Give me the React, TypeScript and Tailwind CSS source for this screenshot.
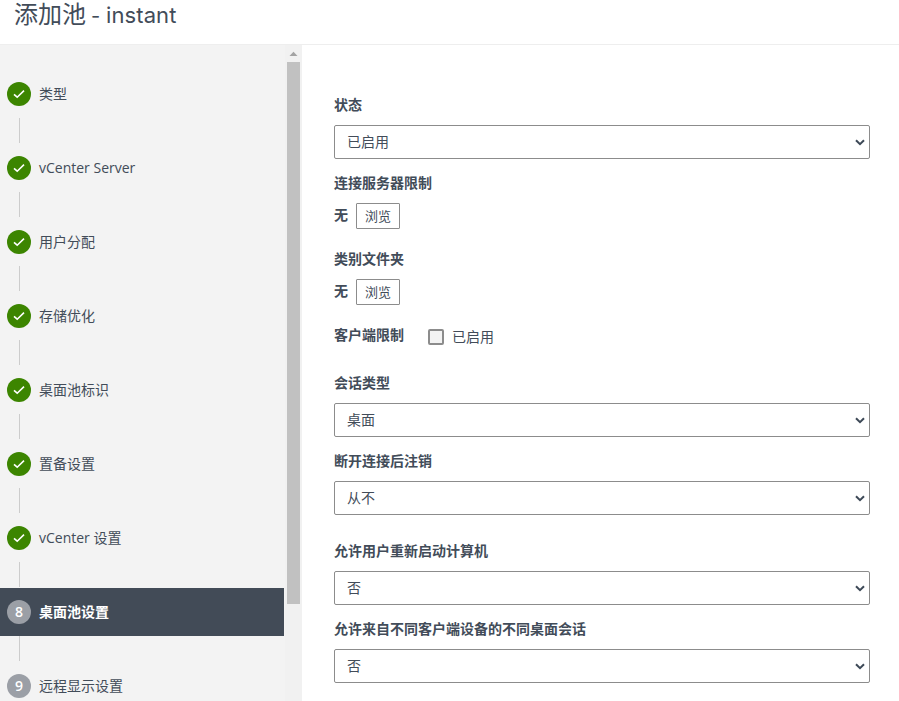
import React from "react";

const steps: { label: string; done: boolean; active?: boolean }[] = [
  { label: "类型", done: true },
  { label: "vCenter Server", done: true },
  { label: "用户分配", done: true },
  { label: "存储优化", done: true },
  { label: "桌面池标识", done: true },
  { label: "置备设置", done: true },
  { label: "vCenter 设置", done: true },
  { label: "桌面池设置", done: false, active: true },
  { label: "远程显示设置", done: false },
];

function StepBadge({ done, index }: { done: boolean; index: number }) {
  if (done) {
    return (
      <span className="flex size-6 shrink-0 items-center justify-center rounded-full bg-[#3c8500]">
        <svg width="12" height="10" viewBox="0 0 12 10" fill="none" stroke="#fff" strokeWidth="1.6">
          <path d="M1 5.3 L4.2 8.2 L11 1.6" />
        </svg>
      </span>
    );
  }
  return (
    <span className="flex size-6 shrink-0 items-center justify-center rounded-full bg-[#9b9fa6] text-sm font-semibold text-white">
      {index}
    </span>
  );
}

function Sidebar() {
  return (
    <aside className="flex w-[302px] shrink-0 bg-[#f3f3f3]">
      <ol className="w-[284px] overflow-hidden pt-[25px]">
        {steps.map((step, i) => (
          <li key={step.label} className="h-[74px]">
            <div
              className={
                step.active
                  ? "flex h-12 items-center gap-2 bg-[#424b57] pl-[7px] font-bold text-white"
                  : "flex h-12 items-center gap-2 pl-[7px]"
              }
            >
              <StepBadge done={step.done} index={i + 1} />
              <span>{step.label}</span>
            </div>
            <div className="ml-[19px] h-[25px] w-px bg-[#cccccc]" />
          </li>
        ))}
      </ol>
      <div className="ml-px flex w-[17px] flex-col items-center bg-[#f1f1f1]">
        <svg className="h-[17px] w-[17px]" viewBox="0 0 17 17" fill="#a3a3a3">
          <path d="M4.5 11 H12.5 L8.5 6.8 Z" />
        </svg>
        <div className="h-[542px] w-[13px] bg-[#c1c1c1]" />
      </div>
    </aside>
  );
}

function Label({ children }: { children: React.ReactNode }) {
  return <div className="h-5 font-bold leading-5">{children}</div>;
}

function SelectField({ label, value }: { label: string; value: string }) {
  return (
    <div>
      <Label>{label}</Label>
      <div className="mt-2.5 flex h-[34px] w-[536px] items-center justify-between rounded-[2px] border border-[#8c8c8c] pl-3 pr-1">
        <span>{value}</span>
        <svg width="10" height="7" viewBox="0 0 10 7" fill="none" stroke="#3d4957" strokeWidth="2">
          <path d="M1 1.2 L5 5.2 L9 1.2" />
        </svg>
      </div>
    </div>
  );
}

function BrowseField({ label }: { label: string }) {
  return (
    <div>
      <Label>{label}</Label>
      <div className="mt-2.5 flex h-[26px] gap-2">
        <span className="font-bold leading-6">无</span>
        <button className="h-[26px] w-11 rounded-[1px] border border-[#8c8c8c] text-[13px] leading-6">浏览</button>
      </div>
    </div>
  );
}

export default function App() {
  return (
    <div className="flex h-[701px] w-[899px] flex-col overflow-hidden bg-white font-['Open_Sans','Noto_Sans_CJK_SC',sans-serif] text-sm text-[#424c59]">
      <header className="h-[45px] shrink-0 border-b border-[#eeeeee] pl-[14px]">
        <h1 className="flex items-baseline font-['Inter','Noto_Sans_CJK_SC',sans-serif] text-[24px] font-normal leading-[30px]">
          <span>添加池</span>
          <span className="ml-[5px] w-[15px] text-[20px]">-</span>
          <span className="text-[22px] tracking-[0.1px]">instant</span>
        </h1>
      </header>
      <div className="flex min-h-0 flex-1">
        <Sidebar />
        <main className="flex-1 pl-8 pt-[50px]">
          <SelectField label="状态" value="已启用" />
          <div className="mt-3.5">
            <BrowseField label="连接服务器限制" />
          </div>
          <div className="mt-5">
            <BrowseField label="类别文件夹" />
          </div>
          <div className="mt-5 flex h-5">
            <Label>客户端限制</Label>
            <label className="ml-6 flex h-6 items-center gap-2">
              <span className="size-4 rounded-[2px] border-2 border-[#8c8c8c] bg-[#f3f3f3]" />
              <span>已启用</span>
            </label>
          </div>
          <div className="mt-7">
            <SelectField label="会话类型" value="桌面" />
          </div>
          <div className="mt-3.5">
            <SelectField label="断开连接后注销" value="从不" />
          </div>
          <div className="mt-[26px]">
            <SelectField label="允许用户重新启动计算机" value="否" />
          </div>
          <div className="mt-3.5">
            <SelectField label="允许来自不同客户端设备的不同桌面会话" value="否" />
          </div>
        </main>
      </div>
    </div>
  );
}
